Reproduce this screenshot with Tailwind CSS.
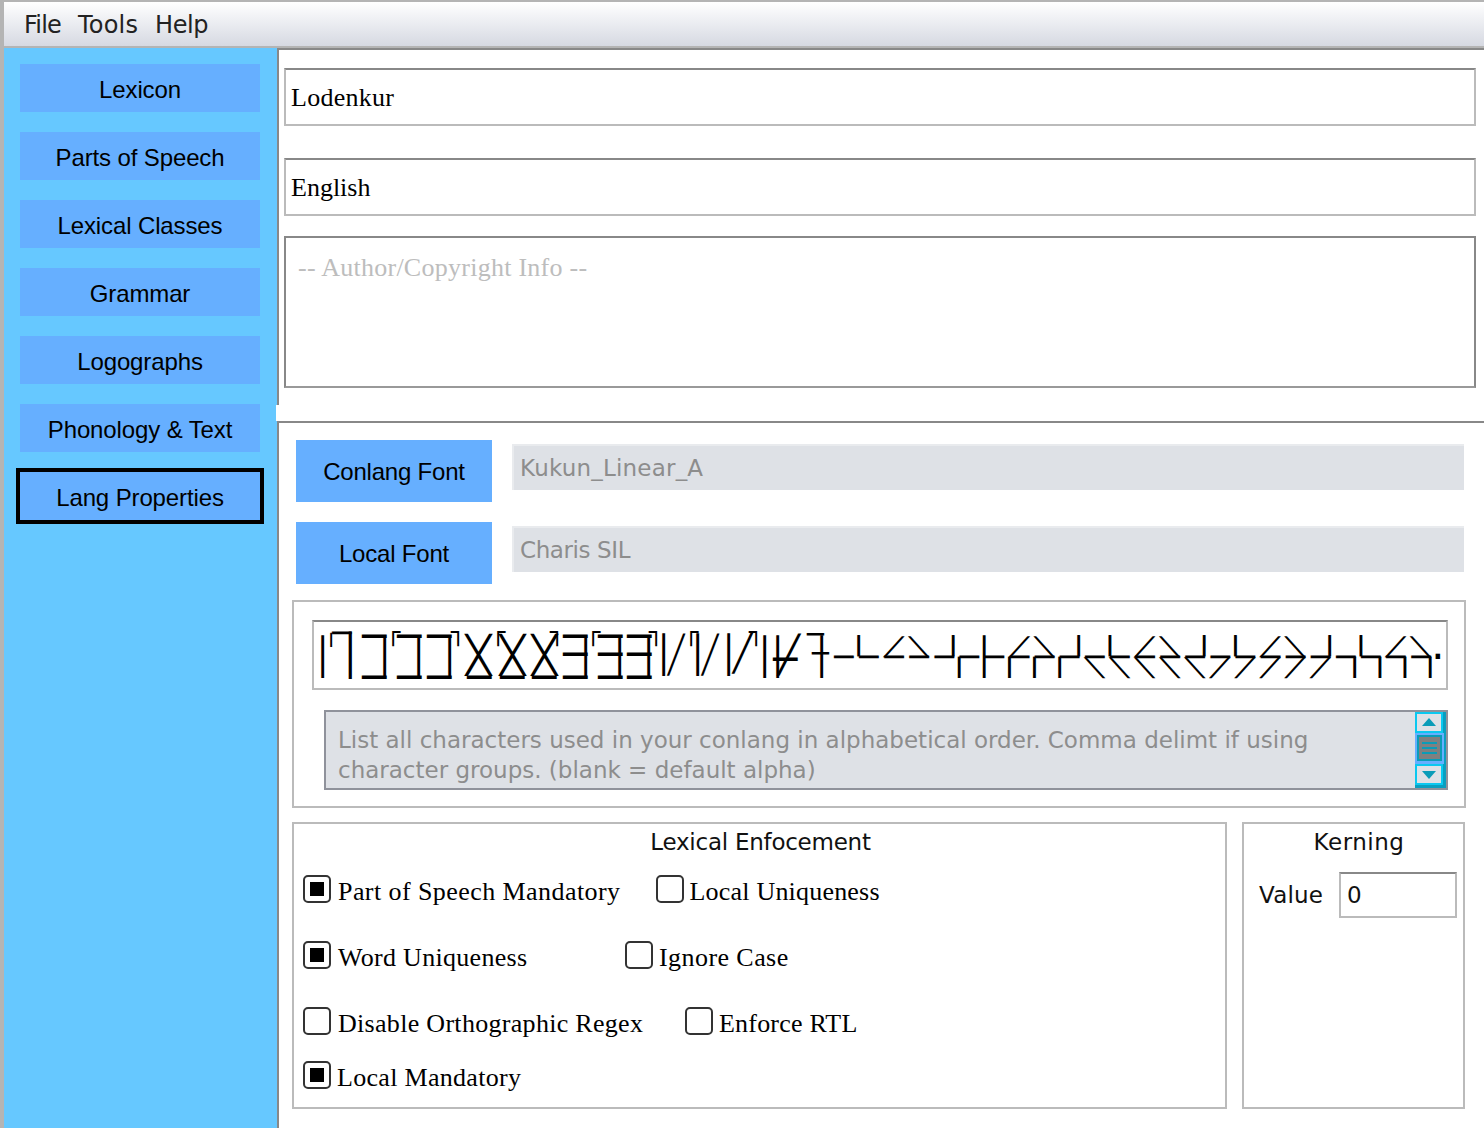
<!doctype html>
<html><head><meta charset="utf-8"><script src="https://cdn.jsdelivr.net/npm/@tailwindcss/browser@4"></script></head>
<body class="bg-white">
<div class="w-[1484px] h-[1128px] overflow-hidden flex flex-col bg-white text-black font-['Liberation_Sans',sans-serif]">
  <!-- menu -->
  <div class="h-[48px] shrink-0 border-t-2 border-l-4 border-b-2 border-[#b4b4b4] bg-gradient-to-b from-white to-[#d6d9e2] flex items-center pl-[20px] pt-[1px] gap-[17px] text-[24px] text-[#222] font-['DejaVu_Sans',sans-serif]">
    <span class="tracking-[-0.8px]">File</span><span class="tracking-[0.2px]">Tools</span><span class="tracking-[-0.4px]">Help</span>
  </div>
  <div class="flex flex-1 min-h-0">
    <!-- sidebar -->
    <aside class="w-[277px] shrink-0 border-l-4 border-[#b4b4b4] bg-[#66c8ff] pt-[16px] pl-[16px] flex flex-col items-start text-[24px] tracking-[-0.12px]">
      <div class="w-[240px] h-[48px] pt-[4px] bg-[#66afff] flex items-center justify-center">Lexicon</div>
      <div class="w-[240px] h-[48px] pt-[4px] mt-[20px] bg-[#66afff] flex items-center justify-center">Parts of Speech</div>
      <div class="w-[240px] h-[48px] pt-[4px] mt-[20px] bg-[#66afff] flex items-center justify-center">Lexical Classes</div>
      <div class="w-[240px] h-[48px] pt-[4px] mt-[20px] bg-[#66afff] flex items-center justify-center">Grammar</div>
      <div class="w-[240px] h-[48px] pt-[4px] mt-[20px] bg-[#66afff] flex items-center justify-center">Logographs</div>
      <div class="w-[240px] h-[48px] pt-[4px] mt-[20px] bg-[#66afff] flex items-center justify-center">Phonology &amp; Text</div>
      <div class="w-[248px] h-[56px] pt-[4px] mt-[16px] -ml-[4px] border-4 border-black bg-[#66afff] flex items-center justify-center">Lang Properties</div>
    </aside>
    <main class="flex-1 min-w-0 flex flex-col">
      <!-- top pane -->
      <section class="h-[373px] shrink-0">
        <div class="h-[357px] border-l-2 border-t-2 border-[#888] pl-[5px] pr-[8px] pt-[18px] font-['Liberation_Serif',serif] text-[26px] tracking-[0.26px]">
          <div class="h-[58px] border-2 border-[#bbb] border-t-[#888] pl-[5px] flex items-center">Lodenkur</div>
          <div class="h-[58px] mt-[32px] border-2 border-[#bbb] border-t-[#888] pl-[5px] flex items-center tracking-[0px]">English</div>
          <div class="h-[152px] mt-[20px] border-2 border-[#888] border-b-[#999] pl-[12px] pt-[15px] leading-[30px] text-[#bdbdbd]">-- Author/Copyright Info --</div>
        </div>
        <div class="h-[16px] -ml-[1px] bg-white relative"></div>
      </section>
      <!-- lower pane -->
      <section class="flex-1 min-h-0 border-t-2 border-l-2 border-[#888] pl-[17px] pr-[20px] pt-[17px]">
        <div class="flex items-start gap-[20px]">
          <div class="w-[196px] h-[62px] pt-[2px] shrink-0 bg-[#66afff] flex items-center justify-center text-[24px] tracking-[-0.2px]">Conlang Font</div>
          <div class="flex-1 h-[46px] mt-[4px] bg-[#dee1e6] border-l-2 border-t-2 border-[#e9ebee] pl-[6px] flex items-center font-['DejaVu_Sans',sans-serif] text-[23px] text-[#8d8d8d] tracking-[0.2px]">Kukun_Linear_A</div>
        </div>
        <div class="flex items-start gap-[20px] mt-[20px]">
          <div class="w-[196px] h-[62px] pt-[2px] shrink-0 bg-[#66afff] flex items-center justify-center text-[24px] tracking-[-0.2px]">Local Font</div>
          <div class="flex-1 h-[46px] mt-[4px] bg-[#dee1e6] border-l-2 border-t-2 border-[#e9ebee] pl-[6px] flex items-center font-['DejaVu_Sans',sans-serif] text-[23px] text-[#8d8d8d] tracking-[-0.4px]">Charis SIL</div>
        </div>
        <!-- alphabet panel -->
        <div class="mt-[16px] -ml-[4px] w-[1174px] h-[208px] border-2 border-[#bbb] pl-[18px] pr-[16px] pt-[18px]">
          <div class="relative h-[70px] border-2 border-[#bbb] border-t-[#888] font-['DejaVu_Sans_Mono',monospace] text-black whitespace-pre leading-none">
            <!-- first run of the conlang alphabet -->
            <span class="absolute left-[-2px] top-[14px] text-[36px] leading-[42px]">│</span>
            <span class="absolute left-[24px] top-[13px] text-[40px]">│</span>
            <span class="absolute left-[18px] top-[-5px] text-[32px]">─</span>
            <span class="absolute left-[10px] top-[-1px] text-[24px]">╷</span>

            <span class="absolute left-[48px] top-[-6px] text-[40px]">─</span><span class="absolute left-[48px] top-[35px] text-[40px]">─</span><span class="absolute left-[60px] top-[14px] text-[36px] leading-[42px]">│</span>
            <span class="absolute left-[83px] top-[-6px] text-[40px]">─</span><span class="absolute left-[83px] top-[35px] text-[40px]">─</span><span class="absolute left-[94px] top-[14px] text-[36px] leading-[42px]">│</span>
            <span class="absolute left-[113px] top-[-6px] text-[40px]">─</span><span class="absolute left-[113px] top-[35px] text-[40px]">─</span><span class="absolute left-[125px] top-[14px] text-[36px] leading-[42px]">│</span>
            <span class="absolute left-[72px] top-[-2px] text-[24px]">┌</span>
            <span class="absolute left-[137px] top-[-2px] text-[24px]">┐</span>

            <span class="absolute left-[152px] top-[12px] text-[36px] leading-[42px] scale-x-[1.15] origin-left">╳</span><span class="absolute left-[153px] top-[35px] text-[40px]">─</span>
            <span class="absolute left-[186px] top-[12px] text-[36px] leading-[42px] scale-x-[1.15] origin-left">╳</span><span class="absolute left-[186px] top-[35px] text-[40px]">─</span>
            <span class="absolute left-[218px] top-[12px] text-[36px] leading-[42px] scale-x-[1.15] origin-left">╳</span><span class="absolute left-[218px] top-[35px] text-[40px]">─</span>
            <span class="absolute left-[177px] top-[-2px] text-[24px]">┌</span>
            <span class="absolute left-[236px] top-[-2px] text-[24px]">┐</span>

            <span class="absolute left-[249px] top-[-6px] text-[40px]">─</span><span class="absolute left-[249px] top-[12px] text-[40px]">─</span><span class="absolute left-[249px] top-[35px] text-[40px]">─</span><span class="absolute left-[261px] top-[14px] text-[36px] leading-[42px]">│</span>
            <span class="absolute left-[284px] top-[-6px] text-[40px]">─</span><span class="absolute left-[284px] top-[12px] text-[40px]">─</span><span class="absolute left-[284px] top-[35px] text-[40px]">─</span><span class="absolute left-[295px] top-[14px] text-[36px] leading-[42px]">│</span>
            <span class="absolute left-[313px] top-[-6px] text-[40px]">─</span><span class="absolute left-[313px] top-[12px] text-[40px]">─</span><span class="absolute left-[313px] top-[35px] text-[40px]">─</span><span class="absolute left-[324px] top-[14px] text-[36px] leading-[42px]">│</span>
            <span class="absolute left-[272px] top-[-2px] text-[24px]">┌</span>
            <span class="absolute left-[335px] top-[-2px] text-[24px]">┐</span>

            <span class="absolute left-[339px] top-[12px] text-[36px] leading-[42px]">│</span><span class="absolute left-[354px] top-[12px] text-[36px] leading-[42px] scale-x-[0.75] origin-left">╱</span>
            <span class="absolute left-[373px] top-[12px] text-[36px] leading-[42px]">│</span><span class="absolute left-[388px] top-[12px] text-[36px] leading-[42px] scale-x-[0.75] origin-left">╱</span>
            <span class="absolute left-[404px] top-[12px] text-[36px] leading-[42px]">│</span><span class="absolute left-[419px] top-[10px] text-[36px] leading-[42px] scale-x-[0.9] origin-left">╱</span>
            <span class="absolute left-[370px] top-[-2px] text-[24px]">┌</span>
            <span class="absolute left-[435px] top-[-2px] text-[24px]">┐</span>

            <span class="absolute left-[440px] top-[14px] text-[36px] leading-[42px]">│</span>
            <span class="absolute left-[453px] top-[14px] text-[36px] leading-[42px]">│</span><span class="absolute left-[464px] top-[12px] text-[36px] leading-[42px]">╱</span><span class="absolute left-[459px] top-[17px] text-[40px]">─</span>
            <span class="absolute left-[497px] top-[14px] text-[36px] leading-[42px]">│</span><span class="absolute left-[493px] top-[-1px] text-[28px]">─</span><span class="absolute left-[498px] top-[18px] text-[28px]">─</span>
            <!-- second run: bar, stems and diagonals on a shared grid -->
            <div class="absolute left-[520px] top-[14px] text-[32px] leading-[42px] tracking-[5.83px]">────────────────────────</div>
            <div class="absolute left-[509px] top-[14px] text-[36px] leading-[42px] tracking-[3.43px]"> ╵   ╷│╷╷╷ ╵    ╵    ╵  </div>
            <div class="absolute left-[528px] top-[14px] text-[36px] leading-[42px] tracking-[3.43px]">    ╵    ╵    ╵    ╵╷╷╷╷</div>
            <div class="absolute left-[520px] top-[14px] text-[18px] leading-[21px] tracking-[3.5px] scale-x-[1.75] origin-left">  ╱╲   ╱╲   ╱╲   ╱╲   ╱╲</div>
            <div class="absolute left-[520px] top-[35px] text-[18px] leading-[21px] tracking-[3.5px] scale-x-[1.75] origin-left">          ╲╲╲╲╲╱╱╱╱╱</div>
            <span class="absolute left-[1113px] top-[14px] text-[36px] leading-[42px]">·</span>
          </div>
          <div class="flex mt-[20px] ml-[12px] h-[80px] border-2 border-[#8f929b] bg-[#dee1e6]">
            <div class="flex-1 pl-[12px] pt-[13px] font-['DejaVu_Sans',sans-serif] text-[23px] leading-[30px] text-[#8d8d8d]">List all characters used in your conlang in alphabetical order. Comma delimt if using<br>character groups. (blank = default alpha)</div>
            <div class="w-[31px] shrink-0 flex flex-col border-r-[3px] border-b-[3px] border-[#0a9fc0] bg-[#dee1e6]">
              <div class="w-[28px] h-[21px] border-2 border-[#0bc8f0] flex items-center justify-center"><svg width="14" height="9" viewBox="0 0 14 9"><path d="M7 0 14 8H0z" fill="#0a9cb8"/></svg></div>
              <div class="w-[29px] h-[31px] bg-[#66afff] p-[2px] pb-[3px]"><div class="h-full border-2 border-[#0a9cb8] bg-[#808080] flex flex-col justify-center gap-[3px] px-[3px]"><div class="h-[2px] bg-[#0a9cb8]"></div><div class="h-[2px] bg-[#0a9cb8]"></div><div class="h-[2px] bg-[#0a9cb8]"></div></div></div>
              <div class="w-[28px] h-[21px] border-2 border-[#0bc8f0] flex items-center justify-center"><svg width="14" height="9" viewBox="0 0 14 9"><path d="M0 1H14L7 9z" fill="#0a9cb8"/></svg></div>
            </div>
          </div>
        </div>
        <!-- bottom panels -->
        <div class="flex -ml-[4px] mt-[14px] gap-[15px]">
          <div class="w-[935px] h-[287px] shrink-0 border-2 border-[#bbb] font-['Liberation_Serif',serif] text-[26px] tracking-[0.43px] pl-[9px]">
            <div class="h-[36px] -ml-[7px] flex items-center justify-center font-['DejaVu_Sans',sans-serif] text-[23px] tracking-[-0.25px] text-[#111]">Lexical Enfocement</div>
            <div class="flex items-center h-[28px] mt-[15px]">
              <span class="w-[28px] h-[28px] shrink-0 border-2 border-[#333] rounded-[5px] flex items-center justify-center"><span class="w-[14px] h-[14px] bg-black"></span></span><span class="ml-[7px] pt-[4px]">Part of Speech Mandatory</span>
              <span class="ml-[35px] w-[28px] h-[28px] shrink-0 border-2 border-[#333] rounded-[5px]"></span><span class="ml-[6px] pt-[4px] tracking-[0.2px]">Local Uniqueness</span>
            </div>
            <div class="flex items-center h-[28px] mt-[38px]">
              <span class="w-[28px] h-[28px] shrink-0 border-2 border-[#333] rounded-[5px] flex items-center justify-center"><span class="w-[14px] h-[14px] bg-black"></span></span><span class="ml-[7px] pt-[4px] w-[287px] tracking-[0.3px]">Word Uniqueness</span>
              <span class="w-[28px] h-[28px] shrink-0 border-2 border-[#333] rounded-[5px]"></span><span class="ml-[6px] pt-[4px]">Ignore Case</span>
            </div>
            <div class="flex items-center h-[28px] mt-[38px]">
              <span class="w-[28px] h-[28px] shrink-0 border-2 border-[#333] rounded-[5px]"></span><span class="ml-[7px] pt-[4px] w-[347px] tracking-[0.3px]">Disable Orthographic Regex</span>
              <span class="w-[28px] h-[28px] shrink-0 border-2 border-[#333] rounded-[5px]"></span><span class="ml-[6px] pt-[4px] tracking-[0.2px]">Enforce RTL</span>
            </div>
            <div class="flex items-center h-[28px] mt-[26px]">
              <span class="w-[28px] h-[28px] shrink-0 border-2 border-[#333] rounded-[5px] flex items-center justify-center"><span class="w-[14px] h-[14px] bg-black"></span></span><span class="ml-[6px] pt-[4px] tracking-[0.3px]">Local Mandatory</span>
            </div>
          </div>
          <div class="w-[223px] h-[287px] shrink-0 border-2 border-[#bbb] font-['DejaVu_Sans',sans-serif] text-[23px] tracking-[0.2px] text-[#111]">
            <div class="h-[36px] pl-[11px] tracking-[0.5px] flex items-center justify-center">Kerning</div>
            <div class="flex items-center mt-[12px] pl-[15px]">
              <span class="w-[80px]">Value</span>
              <div class="w-[118px] h-[46px] border-2 border-[#bbb] border-t-[#888] pl-[6px] flex items-center">0</div>
            </div>
          </div>
        </div>
      </section>
    </main>
  </div>
</div>
</body></html>
